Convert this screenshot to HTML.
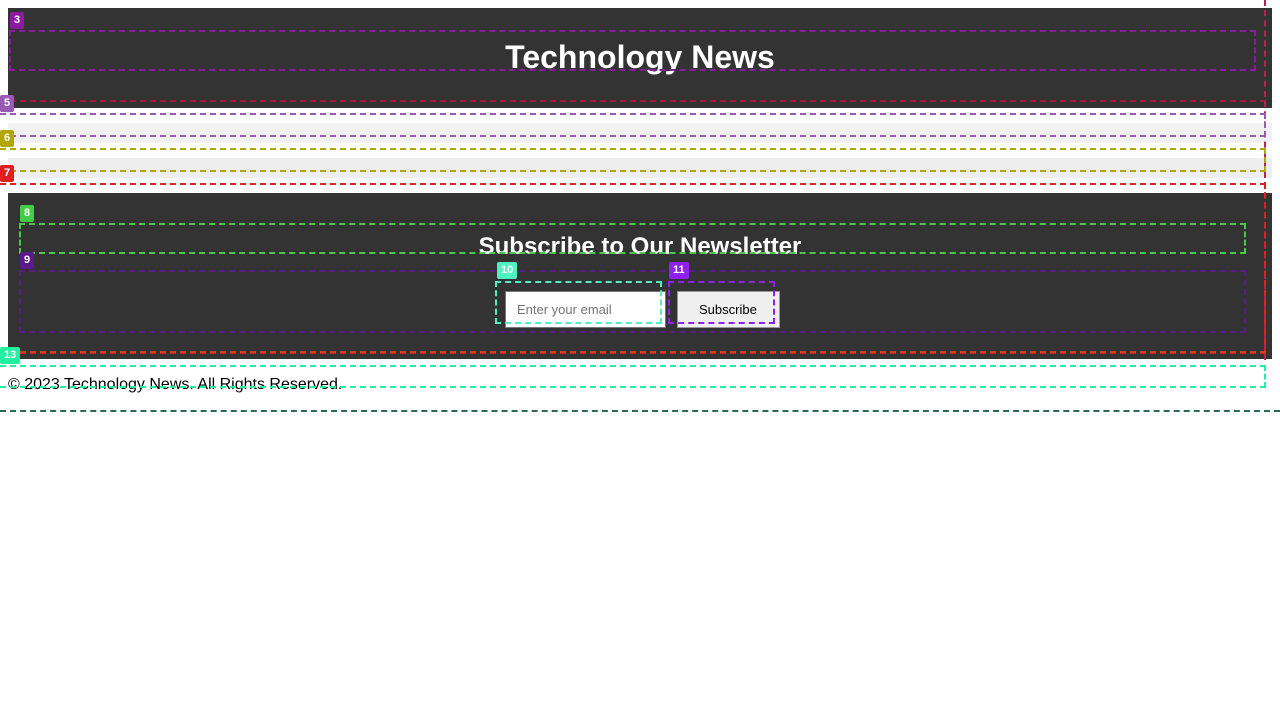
<!DOCTYPE html>
<html><head><style>
body{margin:0;width:1280px;height:720px;position:relative;background:#fff;font-family:"Liberation Sans",Arial,sans-serif;overflow:hidden}
.a{position:absolute}
.b{position:absolute;border:2px dashed;box-sizing:border-box}
.l{position:absolute;color:#fff;font-size:11px;font-weight:bold;padding:2px 4px;border-radius:2px;line-height:13px}
</style></head><body>
<div class="a" style="left:8px;top:8px;width:1264px;height:100px;background:#333"></div>
<div class="a" style="left:0;top:39px;width:1280px;text-align:center;color:#fff;font-weight:bold;font-size:32px;line-height:36px">Technology News</div>
<div class="a" style="left:8px;top:123px;width:1264px;height:20px;background:#f2f2f2"></div>
<div class="a" style="left:8px;top:158px;width:1264px;height:20px;background:#eee"></div>
<div class="a" style="left:8px;top:193px;width:1264px;height:166px;background:#333"></div>
<div class="a" style="left:0;top:233px;width:1280px;text-align:center;color:#fff;font-weight:bold;font-size:24px;line-height:28px">Subscribe to Our Newsletter</div>
<div class="a" style="left:505px;top:291px;width:161px;height:37px;background:#fff;border:1px solid #767676;box-sizing:border-box;font-size:13px;color:#757575;padding:10px 0 0 11px">Enter your email</div>
<div class="a" style="left:677px;top:291px;width:103px;height:37px;background:#efefef;border:1px solid #999;box-sizing:border-box;font-size:13px;color:#000;padding:10px 0 0 21px">Subscribe</div>
<div class="a" style="left:8px;top:376px;font-size:16px;line-height:18px">© 2023 Technology News. All Rights Reserved.</div>

<div class="b" style="left:9px;top:30px;width:1247px;height:41px;border-color:#8a1aa0"></div>
<div class="a" style="left:0;top:100px;width:1266px;border-top:2px dashed #b01040"></div>
<div class="a" style="left:1264px;top:0;height:360px;border-left:2px dashed #c02050"></div>
<div class="b" style="left:0;top:113px;width:1266px;height:24px;border-color:#9b59b6;border-left:none"></div>
<div class="b" style="left:0;top:148px;width:1266px;height:24px;border-color:#b0a800;border-left:none"></div>
<div class="b" style="left:0;top:183px;width:1266px;height:171px;border-color:#e02020;border-left:none"></div>
<div class="a" style="left:0;top:351px;width:1266px;border-top:2px dashed #d04020"></div>
<div class="b" style="left:19px;top:223px;width:1227px;height:31px;border-color:#44cc44"></div>
<div class="b" style="left:19px;top:270px;width:1227px;height:63px;border-color:#5a1a8a"></div>
<div class="b" style="left:495px;top:281px;width:167px;height:43px;border-color:#50f0c0"></div>
<div class="b" style="left:668px;top:281px;width:107px;height:43px;border-color:#9020f0"></div>
<div class="b" style="left:0;top:365px;width:1266px;height:23px;border-color:#20f0a0;border-left:none"></div>
<div class="a" style="left:0;top:410px;width:1280px;border-top:2px dashed #2a6a50"></div>

<div class="l" style="left:10px;top:12px;background:#8a1aa0">3</div>
<div class="l" style="left:0;top:95px;background:#9b59b6">5</div>
<div class="l" style="left:0;top:130px;background:#b0a800">6</div>
<div class="l" style="left:0;top:165px;background:#e02020">7</div>
<div class="l" style="left:20px;top:205px;background:#44cc44">8</div>
<div class="l" style="left:20px;top:252px;background:#5a1a8a">9</div>
<div class="l" style="left:497px;top:262px;background:#50f0c0">10</div>
<div class="l" style="left:669px;top:262px;background:#9020f0">11</div>
<div class="l" style="left:0;top:347px;background:#20f0a0">13</div>
</body></html>
